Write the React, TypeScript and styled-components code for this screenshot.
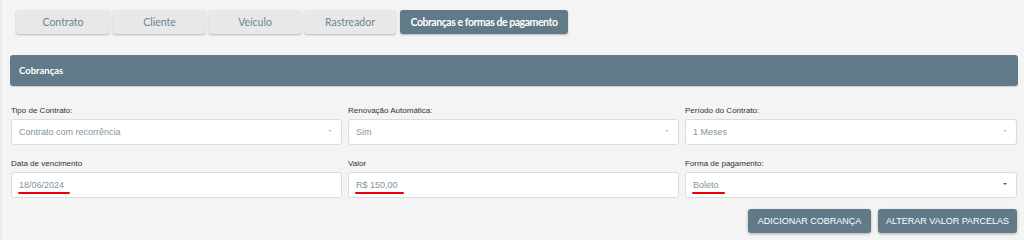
import styled, { createGlobalStyle } from 'styled-components'

const GlobalStyle = createGlobalStyle`
  html, body {
    margin: 0;
    padding: 0;
    background: #f4f4f4;
  }
  * {
    box-sizing: border-box;
  }
`

const tabs = [
  { title: 'Contrato', width: 94 },
  { title: 'Cliente', width: 93 },
  { title: 'Veículo', width: 92 },
  { title: 'Rastreador', width: 92 },
  { title: 'Cobranças e formas de pagamento', width: 168 }
]

type Field = {
  label: string
  value: string
  select?: boolean
  marked?: boolean
  strong?: boolean
}

const rows: Field[][] = [
  [
    { label: 'Tipo de Contrato:', value: 'Contrato com recorrência', select: true },
    { label: 'Renovação Automática:', value: 'Sim', select: true },
    { label: 'Período do Contrato:', value: '1 Meses', select: true }
  ],
  [
    { label: 'Data de vencimento', value: '18/06/2024', marked: true },
    { label: 'Valor', value: 'R$ 150,00', marked: true },
    { label: 'Forma de pagamento:', value: 'Boleto', select: true, marked: true, strong: true }
  ]
]

const App = () => {
  return (
    <Page>
      <GlobalStyle />
      <TabBar>
        {tabs.map((tab, index) => (
          <Tab key={tab.title} $width={tab.width} $active={index === tabs.length - 1}>
            {tab.title}
          </Tab>
        ))}
      </TabBar>

      <SectionHeader>Cobranças</SectionHeader>

      {rows.map((row, r) => (
        <FormRow key={r} $first={r === 0}>
          {row.map(field => (
            <FieldBox key={field.label}>
              <Label>{field.label}</Label>
              <Input>
                <Value $marked={field.marked}>{field.value}</Value>
                {field.select && <Caret $strong={field.strong} />}
              </Input>
            </FieldBox>
          ))}
        </FormRow>
      ))}

      <Actions>
        <ActionButton $width={123}>Adicionar cobrança</ActionButton>
        <ActionButton $width={139}>Alterar valor parcelas</ActionButton>
      </Actions>
    </Page>
  )
}

export default App

const Page = styled.div`
  width: 1024px;
  height: 240px;
  padding: 10px 6px 0 10px;
  background: #f4f4f4;
  box-shadow: inset 2px 0 0 #ebebeb;
  font-family: 'Liberation Sans', Arial, sans-serif;
  overflow: hidden;
`

const TabBar = styled.div`
  display: flex;
  gap: 3px;
  padding-left: 6px;
  height: 24px;
`

const Tab = styled.div<{ $active?: boolean; $width: number }>`
  display: flex;
  align-items: center;
  justify-content: center;
  width: ${({ $width }) => $width}px;
  height: 24px;
  margin-left: ${({ $active }) => ($active ? '1px' : '0')};
  border-radius: 3px;
  font-family: Lato, 'Open Sans', sans-serif;
  font-size: ${({ $active }) => ($active ? '10.5px' : '10.5px')};
  font-weight: ${({ $active }) => ($active ? 700 : 400)};
  letter-spacing: ${({ $active }) => ($active ? '-0.45px' : '0')};
  white-space: nowrap;
  color: ${({ $active }) => ($active ? '#ffffff' : '#6b8591')};
  background: ${({ $active }) => ($active ? '#607b87' : '#e8e8e8')};
  box-shadow: 0 1px 2px rgba(0, 0, 0, 0.25);
`

const SectionHeader = styled.div`
  margin-top: 21px;
  height: 31px;
  display: flex;
  align-items: center;
  padding-left: 9px;
  background: #607b87;
  border-radius: 3px;
  color: #ffffff;
  font-family: Lato, 'Open Sans', sans-serif;
  font-weight: 700;
  font-size: 9.5px;
  box-shadow: 0 1px 1px rgba(0, 0, 0, 0.15);
`

const FormRow = styled.div<{ $first?: boolean }>`
  display: grid;
  grid-template-columns: 331px 331px 332px;
  gap: 6px;
  margin-top: ${({ $first }) => ($first ? '19px' : '13px')};
  margin-left: 1px;
`

const FieldBox = styled.div`
  display: flex;
  flex-direction: column;
`

const Label = styled.label`
  font-size: 8px;
  color: #333333;
  line-height: 12px;
  margin-bottom: 2px;
`

const Input = styled.div`
  position: relative;
  display: flex;
  align-items: center;
  height: 26px;
  padding: 0 7px;
  background: #ffffff;
  border: 1px solid #dcdcdc;
  border-radius: 3px;
`

const Value = styled.span<{ $marked?: boolean }>`
  position: relative;
  font-size: 9px;
  color: #7f93a0;
  ${({ $marked }) =>
    $marked &&
    `
    &::after {
      content: '';
      position: absolute;
      left: -1px;
      right: -6px;
      bottom: -4px;
      height: 2px;
      border-radius: 2px;
      background: #e8000b;
    }
  `}
`

const Caret = styled.span<{ $strong?: boolean }>`
  position: absolute;
  right: 9px;
  top: 50%;
  margin-top: -2px;
  width: 0;
  height: 0;
  border-left: 2px solid transparent;
  border-right: 2px solid transparent;
  border-top: 2.5px solid ${({ $strong }) => ($strong ? '#555' : '#c4c4c4')};
`

const Actions = styled.div`
  display: flex;
  justify-content: flex-end;
  gap: 7px;
  margin-top: 11px;
  padding-right: 1px;
`

const ActionButton = styled.button<{ $width: number }>`
  width: ${({ $width }) => $width}px;
  height: 24px;
  padding: 0;
  border: none;
  border-radius: 3px;
  background: #607b87;
  color: #ffffff;
  font-family: 'Liberation Sans', Arial, sans-serif;
  font-size: 9px;
  text-transform: uppercase;
  white-space: nowrap;
  box-shadow: 0 1px 3px rgba(0, 0, 0, 0.3);
  cursor: pointer;
`
